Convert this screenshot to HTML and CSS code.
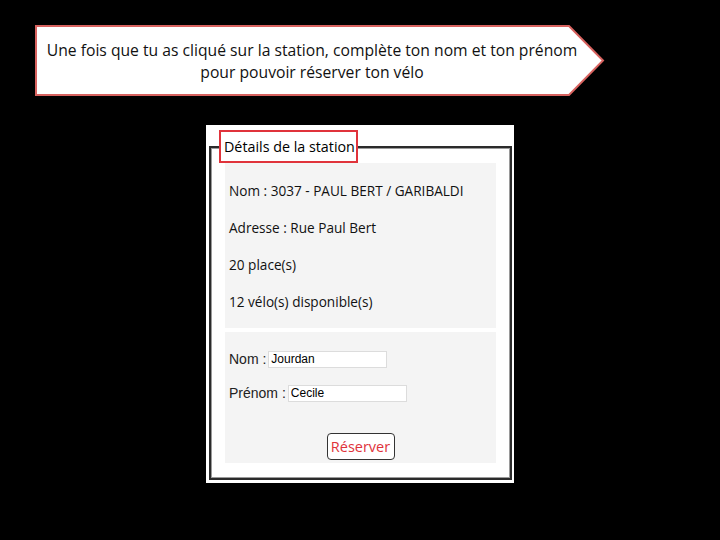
FILE: index.html
```html
<!DOCTYPE html>
<html lang="fr">
<head>
<meta charset="utf-8">
<link rel="stylesheet" href="styles.css">
</head>
<body>
<div class="slide">
  <div class="callout">
    <svg class="callout-shape" viewBox="0 0 570 71" width="570" height="71" aria-hidden="true">
      <polygon points="1,1 534,1 568,35.5 534,70 1,70" fill="#ffffff" stroke="#d7625f" stroke-width="2"/>
    </svg>
    <p class="callout-text">Une fois que tu as cliqué sur la station, complète ton nom et ton prénom<br>pour pouvoir réserver ton vélo</p>
  </div>

  <div class="panel">
    <fieldset class="station">
      <legend class="station-legend">Détails de la station</legend>
      <div class="info-box">
        <div class="info-line">Nom : 3037 - PAUL BERT / GARIBALDI</div>
        <div class="info-line">Adresse : Rue Paul Bert</div>
        <div class="info-line">20 place(s)</div>
        <div class="info-line">12 vélo(s) disponible(s)</div>
      </div>
      <form class="form-box">
        <div class="form-row"><label class="form-label">Nom :</label><input class="form-input" type="text" value="Jourdan"></div>
        <div class="form-row"><label class="form-label">Prénom :</label><input class="form-input" type="text" value="Cecile"></div>
        <div class="form-actions"><button class="reserve-btn" type="button">Réserver</button></div>
      </form>
    </fieldset>
  </div>
</div>
</body>
</html>
```

FILE: styles.css
```css
html, body {
  margin: 0;
  padding: 0;
  background: #000;
}

.slide {
  width: 720px;
  height: 540px;
  padding-top: 25px;
  box-sizing: border-box;
  overflow: hidden;
}

.callout {
  position: relative;
  margin-left: 35px;
  width: 570px;
  height: 71px;
  display: flex;
  align-items: center;
  justify-content: center;
  padding-right: 16px;
  box-sizing: border-box;
}

.callout-shape {
  position: absolute;
  left: 0;
  top: 0;
}

.callout-text {
  position: relative;
  margin: 0;
  font-family: "Open Sans", "Liberation Sans", sans-serif;
  font-size: 15.7px;
  line-height: 22px;
  color: #111;
  text-align: center;
}

.panel {
  margin-left: 206px;
  margin-top: 29px;
  width: 308px;
  height: 358px;
  background: #fff;
  padding: 5px 2px 3px 3px;
  box-sizing: border-box;
}

.station {
  margin: 0;
  padding: 0 14px 15px 14px;
  border: 2px solid #2b2b2b;
  box-shadow: inset 0 0 0 1px #9a9a9a;
  height: 350px;
  box-sizing: border-box;
  font-family: "Open Sans", "Liberation Sans", sans-serif;
}

.station-legend {
  margin-left: -6px;
  padding: 0 3px;
  height: 33px;
  width: 139px;
  box-sizing: border-box;
  border: 2px solid #e0333b;
  background: #fff;
  font-size: 14.3px;
  line-height: 29px;
  color: #000;
  white-space: nowrap;
}

.info-box {
  background: #f4f4f4;
  height: 165px;
  padding: 18px 0 0 4px;
  box-sizing: border-box;
  display: flex;
  flex-direction: column;
  gap: 17px;
}

.info-line {
  font-size: 13.6px;
  line-height: 20px;
  color: #111;
}

.form-box {
  margin-top: 4px;
  background: #f4f4f4;
  height: 131px;
  padding: 18px 0 0 4px;
  box-sizing: border-box;
  display: flex;
  flex-direction: column;
  gap: 16px;
}

.form-row {
  display: flex;
  align-items: center;
  height: 18px;
}

.form-label {
  font-family: "Liberation Sans", Arial, sans-serif;
  font-size: 14px;
  color: #222;
  margin-right: 2px;
}

.form-input {
  width: 119px;
  height: 17px;
  box-sizing: border-box;
  border: 1px solid #dcdcdc;
  background: #fff;
  padding: 0 2px;
  font-family: "Liberation Sans", Arial, sans-serif;
  font-size: 12px;
  color: #000;
}

.form-actions {
  display: flex;
  justify-content: center;
  margin-top: 15px;
  padding-right: 4px;
}

.reserve-btn {
  width: 68px;
  height: 27px;
  box-sizing: border-box;
  border: 1.5px solid #333;
  border-radius: 4px;
  background: #fff;
  color: #e0333b;
  font-family: "Open Sans", "Liberation Sans", sans-serif;
  font-size: 14.5px;
  padding: 0;
}
```
